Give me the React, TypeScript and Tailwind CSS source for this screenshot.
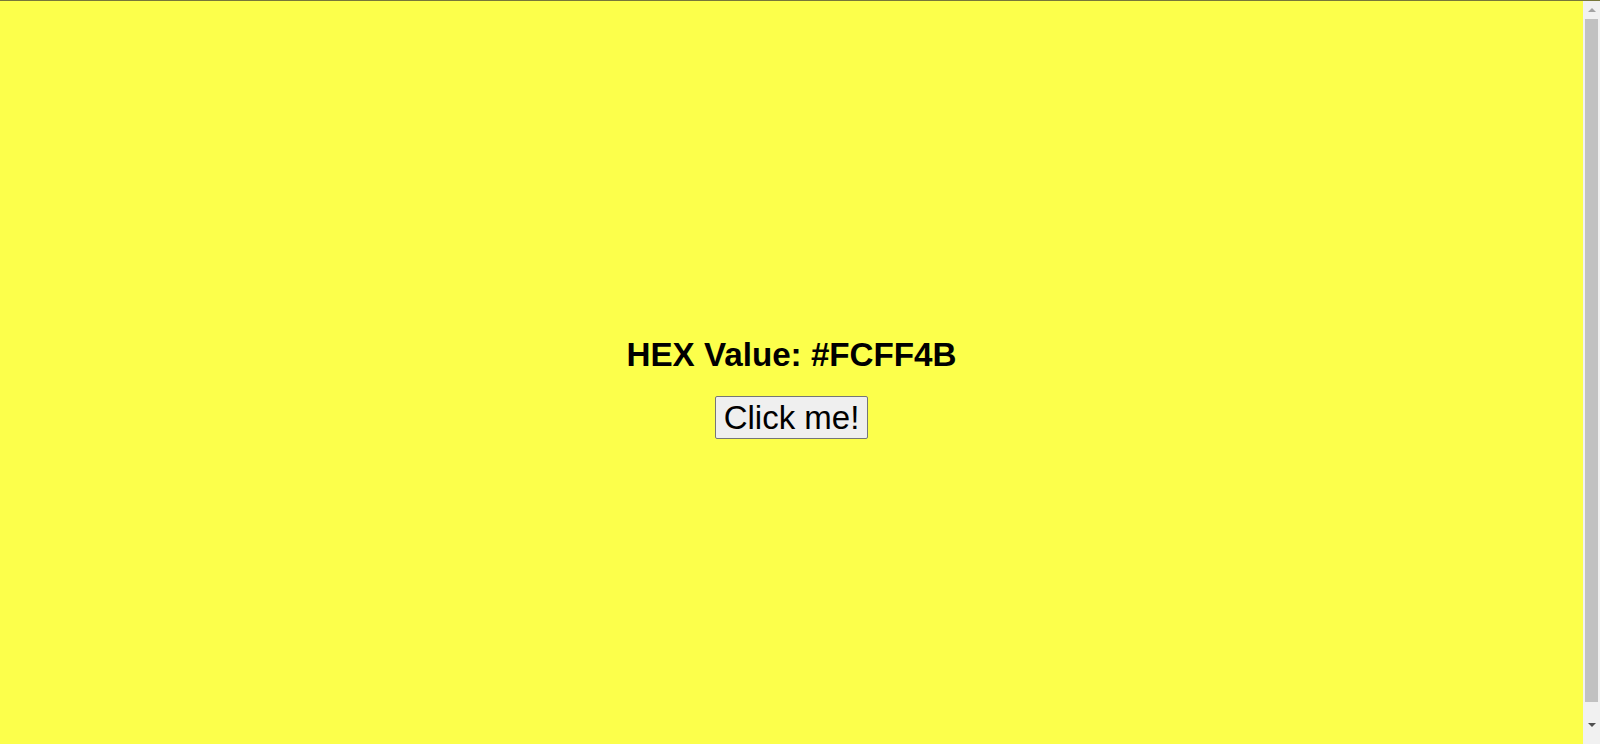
export default function App() {
  return (
    <div className="flex h-[744px] w-[1600px] flex-col overflow-hidden bg-[#fcff4b]" style={{ fontFamily: '"Liberation Sans", Arial, sans-serif' }}>
      <div className="h-px w-full shrink-0 bg-[#77773a]" />
      <div className="flex min-h-0 flex-1 flex-row">
        <main className="flex flex-1 flex-col items-center pt-[335px]">
          <h1 className="m-0 text-[33.2px] font-bold leading-[38px] text-black">HEX Value: #FCFF4B</h1>
          <button className="mt-[22px] rounded-[2px] border border-[#767676] bg-[#efefef] px-[8px] py-[2px] text-[33px] leading-[37px] text-black">
            Click me!
          </button>
        </main>
        <div className="flex w-[17px] shrink-0 flex-col bg-[#f1f1f1]">
          <div className="flex h-[17px] items-center justify-center">
            <div className="h-0 w-0 border-x-[4px] border-b-[4px] border-x-transparent border-b-[#a3a3a3]" />
          </div>
          <div className="mt-px flex justify-center">
            <div className="h-[683px] w-[13px] bg-[#c1c1c1]" />
          </div>
          <div className="h-[14px]" />
          <div className="flex h-[17px] items-center justify-center">
            <div className="h-0 w-0 border-x-[4px] border-t-[4px] border-x-transparent border-t-[#505050]" />
          </div>
        </div>
      </div>
    </div>
  );
}
